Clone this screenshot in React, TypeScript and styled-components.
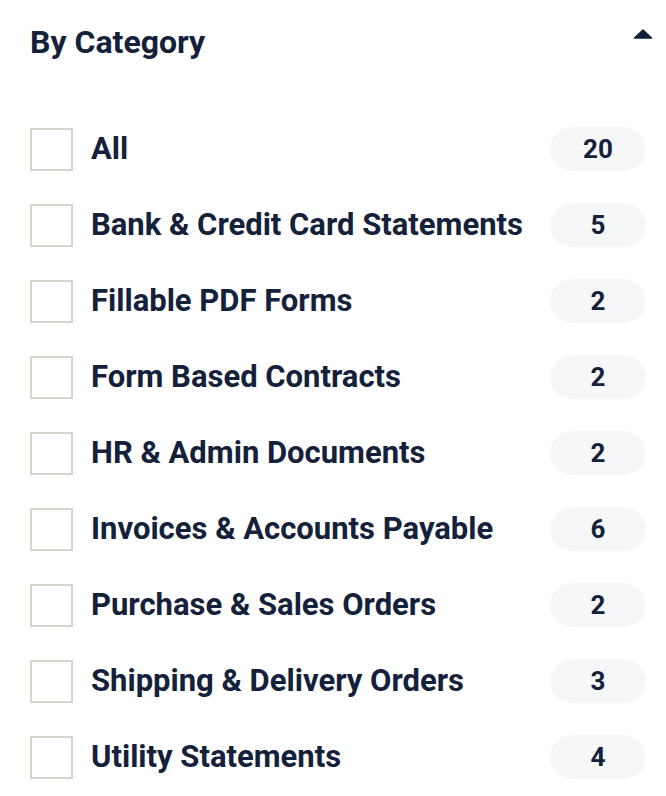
import React from "react";
import styled, { createGlobalStyle } from "styled-components";

const GlobalStyle = createGlobalStyle`
  body {
    margin: 0;
    background: #ffffff;
    font-family: Roboto, "Liberation Sans", sans-serif;
  }
`;

const Panel = styled.section`
  padding: 24px 20px 0 30px;
  color: #14213a;
`;

const Header = styled.header`
  display: flex;
  align-items: flex-start;
  justify-content: space-between;
  margin-bottom: 67px;
`;

const Title = styled.h2`
  margin: 0;
  font-size: 32px;
  font-weight: 700;
  line-height: 36px;
`;

const Toggle = styled.button`
  border: 0;
  padding: 0;
  margin: 5px -7px 0 0;
  background: none;
  display: flex;
  cursor: pointer;
`;

const List = styled.ul`
  list-style: none;
  margin: 0;
  padding: 0;
  display: flex;
  flex-direction: column;
  gap: 32px;
`;

const Row = styled.li`
  display: flex;
  align-items: center;
  height: 44px;
`;

const Box = styled.span`
  flex: none;
  width: 43px;
  height: 43px;
  box-sizing: border-box;
  border: 2px solid #d6d3cd;
  background: #fff;
  margin-right: 18px;
`;

const Label = styled.span`
  flex: 1;
  font-size: 31px;
  font-weight: 700;
  line-height: 36px;
  margin-top: -1px;
  white-space: nowrap;
`;

const Count = styled.span`
  flex: none;
  width: 96px;
  height: 44px;
  border-radius: 22px;
  background: #f5f7f9;
  display: flex;
  align-items: center;
  justify-content: center;
  font-size: 26px;
  font-weight: 700;
`;

const categories: [string, number][] = [
  ["All", 20],
  ["Bank & Credit Card Statements", 5],
  ["Fillable PDF Forms", 2],
  ["Form Based Contracts", 2],
  ["HR & Admin Documents", 2],
  ["Invoices & Accounts Payable", 6],
  ["Purchase & Sales Orders", 2],
  ["Shipping & Delivery Orders", 3],
  ["Utility Statements", 4],
];

const App = () => {
  return (
    <>
      <GlobalStyle />
      <Panel>
        <Header>
          <Title>By Category</Title>
          <Toggle aria-label="Collapse">
            <svg width="20" height="10" viewBox="0 0 20 10">
              <path
                d="M10 1 L18.5 9 L1.5 9 Z"
                fill="#14213a"
                stroke="#14213a"
                strokeWidth="1.5"
                strokeLinejoin="round"
              />
            </svg>
          </Toggle>
        </Header>
        <List>
          {categories.map(([name, count]) => (
            <Row key={name}>
              <Box />
              <Label>{name}</Label>
              <Count>{count}</Count>
            </Row>
          ))}
        </List>
      </Panel>
    </>
  );
};

export default App;
